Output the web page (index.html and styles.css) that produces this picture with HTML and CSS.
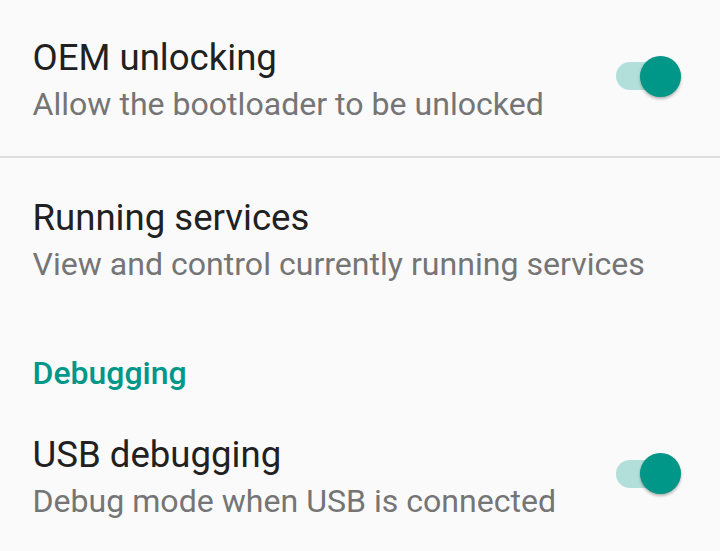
FILE: index.html
```html
<!DOCTYPE html>
<html lang="en">
<head>
<meta charset="utf-8">
<title>Developer options</title>
<link rel="stylesheet" href="styles.css">
</head>
<body>
<main class="list">
  <div class="pref pref-first">
    <div class="pref-text">
      <div class="pref-title">OEM unlocking</div>
      <div class="pref-summary">Allow the bootloader to be unlocked</div>
    </div>
    <div class="switch switch-on" role="switch" aria-checked="true">
      <span class="switch-track"></span>
      <span class="switch-thumb"></span>
    </div>
  </div>
  <div class="divider"></div>
  <div class="pref pref-second">
    <div class="pref-text">
      <div class="pref-title">Running services</div>
      <div class="pref-summary">View and control currently running services</div>
    </div>
  </div>
  <div class="category">Debugging</div>
  <div class="pref pref-third">
    <div class="pref-text">
      <div class="pref-title">USB debugging</div>
      <div class="pref-summary">Debug mode when USB is connected</div>
    </div>
    <div class="switch switch-on" role="switch" aria-checked="true">
      <span class="switch-track"></span>
      <span class="switch-thumb"></span>
    </div>
  </div>
</main>
</body>
</html>
```
FILE: styles.css
```css
html, body {
  margin: 0;
  padding: 0;
  background: #fafafa;
}

body {
  width: 720px;
  height: 551px;
  overflow: hidden;
  font-family: Roboto, "Noto Sans", "Liberation Sans", sans-serif;
}

.list {
  display: flex;
  flex-direction: column;
}

.pref {
  display: flex;
  align-items: center;
  padding-left: 32.5px;
  padding-right: 39px;
}

.pref-first {
  padding-top: 35.5px;
  padding-bottom: 30.5px;
}

.pref-second {
  padding-top: 37.5px;
  padding-bottom: 30.5px;
}

.pref-third {
  padding-top: 38.4px;
  padding-bottom: 28px;
}

.pref-text {
  flex: 1;
  min-width: 0;
}

.pref-title {
  font-size: 36.6px;
  line-height: 44px;
  color: #212121;
  white-space: nowrap;
}

.pref-summary {
  margin-top: 2px;
  font-size: 32.1px;
  line-height: 44px;
  color: #757575;
  white-space: nowrap;
}

.divider {
  height: 2px;
  background: #dedede;
}

.category {
  padding: 35.1px 32.5px 0;
  font-size: 32px;
  line-height: 44px;
  font-weight: 500;
  color: #009688;
}

.switch {
  position: relative;
  width: 65px;
  height: 41px;
  margin-bottom: 9px;
  flex: none;
}

.switch-track {
  position: absolute;
  left: 0;
  top: 6.5px;
  width: 62px;
  height: 28px;
  border-radius: 14px;
  background: #b3dfdb;
}

.switch-thumb {
  position: absolute;
  right: 0;
  top: 0;
  width: 41px;
  height: 41px;
  border-radius: 50%;
  background: #009688;
  box-shadow: 0 2px 3px rgba(0, 0, 0, 0.28), 0 0 1px rgba(0, 0, 0, 0.12);
}
```
